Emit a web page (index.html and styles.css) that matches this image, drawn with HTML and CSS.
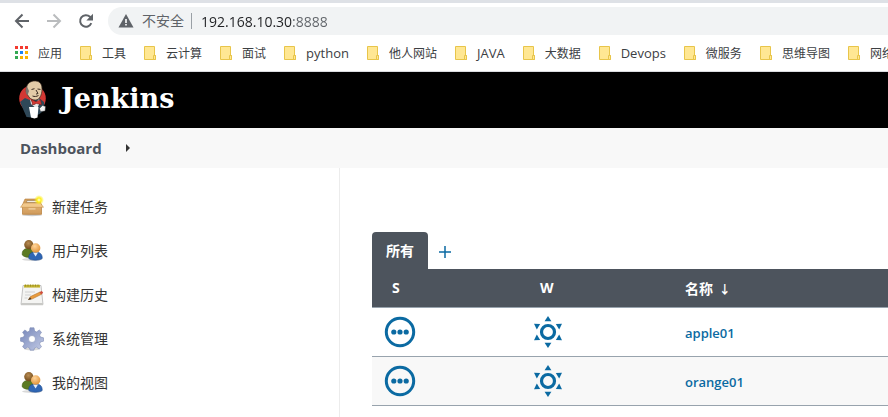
FILE: index.html
```html
<!DOCTYPE html>
<html lang="zh-CN">
<head>
  <meta charset="UTF-8" />
  <title>Dashboard [Jenkins]</title>
  <link rel="stylesheet" href="styles.css">
</head>
<body>
  <!-- shared icons -->
  <svg class="sprite" aria-hidden="true">
    <defs>
      <linearGradient id="box-front" x1="0" y1="0" x2="0" y2="1">
        <stop offset="0" stop-color="#e3b272" />
        <stop offset="1" stop-color="#cf9a5c" />
      </linearGradient>
      <linearGradient id="gear-fill" x1="0" y1="0" x2="1" y2="1">
        <stop offset="0" stop-color="#7485b8" />
        <stop offset="1" stop-color="#c3cbe6" />
      </linearGradient>
      <radialGradient id="head-dark" cx=".45" cy=".35" r=".7">
        <stop offset="0" stop-color="#b98d55" />
        <stop offset="1" stop-color="#6b4413" />
      </radialGradient>
      <radialGradient id="head-light" cx=".4" cy=".3" r=".8">
        <stop offset="0" stop-color="#ffd59a" />
        <stop offset="1" stop-color="#dd8a2c" />
      </radialGradient>
      <radialGradient id="glow">
        <stop offset="0" stop-color="#ffffe8" />
        <stop offset=".4" stop-color="#fff01e" />
        <stop offset="1" stop-color="#fff01e" stop-opacity="0" />
      </radialGradient>
    </defs>
    <symbol id="folder" viewBox="0 0 12 14">
      <path d="M.5.5h10v9h1v4H.5z" fill="#ffe793" stroke="#e8c54a" />
      <path d="M9.5 9.5h2v4h-2z" fill="#ffe793" stroke="#e8c54a" />
    </symbol>
    <symbol id="users" viewBox="0 0 24 24">
      <ellipse cx="12" cy="20.500" rx="10" ry="1.500" fill="#000" opacity=".15" />
      <path d="M2.300 16c-.5-4 1.500-6.500 5.700-6.500s6 2 6 7c-3 2.500-9 2.500-11.700-.5z" fill="#5b7a22" stroke="#405a12" stroke-width=".6" />
      <circle cx="8.800" cy="5.700" r="4.600" fill="url(#head-dark)" />
      <path d="M8.800 19.500c-.3-4.500 2-6.500 6.600-6.500s7 2 6.800 6.500c-3 2.300-10.500 2.300-13.400 0z" fill="#2f66b4" stroke="#1f4a8c" stroke-width=".6" />
      <path d="M13 13.500l2.600 4 2.400-4z" fill="#e6edf7" />
      <circle cx="15.700" cy="9" r="4.700" fill="url(#head-light)" />
    </symbol>
    <symbol id="pending" viewBox="0 0 32 32">
      <circle cx="16" cy="16" r="13.700" fill="none" stroke="#0b6aa2" stroke-width="3" />
      <circle cx="9.800" cy="16" r="2.600" fill="#0b6aa2" />
      <circle cx="16" cy="16" r="2.600" fill="#0b6aa2" />
      <circle cx="22.200" cy="16" r="2.600" fill="#0b6aa2" />
    </symbol>
    <symbol id="sunny" viewBox="0 0 32 32">
      <circle cx="16" cy="16" r="6.500" fill="none" stroke="#0b6aa2" stroke-width="3.200" />
      <g fill="#0b6aa2">
        <path d="M16 0l3.400 5.200h-6.800z" />
        <path d="M16 32l3.400-5.200h-6.800z" />
        <path d="M2 7.700l6.200.3-3.400 5.400z" />
        <path d="M30 7.700l-6.200.3 3.400 5.400z" />
        <path d="M2 24.300l6.200-.3-3.400-5.400z" />
        <path d="M30 24.300l-6.200-.3 3.400-5.400z" />
      </g>
    </symbol>
  </svg>

  <div class="browser">
    <div class="toolbar">
      <button class="nav-btn" type="button" aria-label="后退">
        <svg width="16" height="16" viewBox="0 0 16 16"><path d="M15 8H2M8.500 1.500L2 8l6.500 6.500" fill="none" stroke="#5f6368" stroke-width="2" /></svg>
      </button>
      <button class="nav-btn" type="button" aria-label="前进">
        <svg width="16" height="16" viewBox="0 0 16 16"><path d="M1 8h13M7.500 1.500L14 8l-6.500 6.500" fill="none" stroke="#babcbe" stroke-width="2" /></svg>
      </button>
      <button class="nav-btn" type="button" aria-label="重新加载">
        <svg width="16" height="16" viewBox="0 0 16 16"><path d="M13.300 10.200A5.800 5.800 0 1 1 12 3.800l1.400 1.400" fill="none" stroke="#5f6368" stroke-width="2" /><path d="M15 .8v6.700H8.300z" fill="#5f6368" /></svg>
      </button>
      <div class="address">
        <svg width="16" height="14" viewBox="0 0 16 14"><path d="M8 0l7.500 13.500H.5z" fill="#5f6368" /><path d="M7.200 5h1.600v4H7.200zM7.200 10h1.600v1.600H7.200z" fill="#fff" /></svg>
        <label class="security" for="url">不安全</label>
        <input class="url" id="url" type="text" value="192.168.10.30:8888" />
      </div>
    </div>
    <nav class="bookmarks">
      <a href="#">
        <svg width="13" height="14" viewBox="0 0 13 14">
          <path d="M0 0h3v3H0zM5 0h3v3H5zM10 0h3v3h-3z" fill="#f33a2f" />
          <path d="M0 5h3v3H0zM0 10h3v3H0z" fill="#34a853" />
          <path d="M5 5h3v3H5z" fill="#1a82f7" />
          <path d="M10 5h3v3h-3zM5 10h3v3H5zM10 10h3v3h-3z" fill="#fbb300" />
        </svg>
        应用
      </a>
      <a href="#"><svg width="12" height="14"><use href="#folder" /></svg>工具</a>
      <a href="#"><svg width="12" height="14"><use href="#folder" /></svg>云计算</a>
      <a href="#"><svg width="12" height="14"><use href="#folder" /></svg>面试</a>
      <a class="latin" href="#"><svg width="12" height="14"><use href="#folder" /></svg>python</a>
      <a href="#"><svg width="12" height="14"><use href="#folder" /></svg>他人网站</a>
      <a class="latin" href="#"><svg width="12" height="14"><use href="#folder" /></svg>JAVA</a>
      <a href="#"><svg width="12" height="14"><use href="#folder" /></svg>大数据</a>
      <a class="latin" href="#"><svg width="12" height="14"><use href="#folder" /></svg>Devops</a>
      <a href="#"><svg width="12" height="14"><use href="#folder" /></svg>微服务</a>
      <a href="#"><svg width="12" height="14"><use href="#folder" /></svg>思维导图</a>
      <a href="#"><svg width="12" height="14"><use href="#folder" /></svg>网络</a>
    </nav>
  </div>

  <header class="header">
    <a class="logo" href="#">
      <svg width="28" height="40" viewBox="0 0 28 40">
        <circle cx="13.500" cy="18.500" r="13.300" fill="#d33833" />
        <path d="M1 22l5-4 7 3 7-3 5 4 .5 8-5 4-8 3.500-5-.5z" fill="#2f4858" />
        <path d="M11 19l4 6 5-6 1 3-3 7-6-5z" fill="#e9e9e9" />
        <path d="M7.500 8c.5-5 4.500-7.200 9-7 5 .3 6.800 4 6.500 9-.2 5-2.500 9.800-6.300 10-4 .3-6.500-2-8-5-1.500-2-2-4.500-1.200-7z" fill="#e3cba8" stroke="#3a2c22" stroke-width=".7" />
        <path d="M8 6.500c-2 3-1.800 6.500.5 9l1.500-4.500z" fill="#77736c" />
        <path d="M12.500 9.500l3-.8M18.500 9l3 .4M17 10l2 3.500-2 .6M13.500 16c2 .8 4 .6 6-.5" fill="none" stroke="#3a2c22" stroke-width="1" />
        <path d="M12.500 19.500l4.500 2.200 4.500-2 1 5-5-1.200-4 1.500z" fill="#d33833" stroke="#6f1815" stroke-width=".5" />
        <path d="M10 27h9.500l-1 10.500-3 1-3.500-1z" fill="#fff" />
        <path d="M20.500 28.500l3-3 3 1-.5 4.500-4.500.5z" fill="#f2f2f2" stroke="#333" stroke-width=".4" />
      </svg>
      <span>Jenkins</span>
    </a>
  </header>

  <nav class="breadcrumb">
    <a href="#">Dashboard</a>
    <svg width="4" height="8" viewBox="0 0 4 8"><path d="M0 0l4 4-4 4z" fill="#333" /></svg>
  </nav>

  <div class="page">
    <aside class="side-panel">
      <ul class="tasks">
        <li><a href="#">
          <svg width="24" height="24" viewBox="0 0 24 24">
            <ellipse cx="12" cy="20" rx="10" ry="1.200" fill="#000" opacity=".2" />
            <path d="M5 4h14l2 4.500H3z" fill="#d3a15f" stroke="#b67b35" stroke-width=".6" />
            <path d="M7 5.500h10l.6 2H6.400z" fill="#f0ece4" stroke="#8d6a3c" stroke-width=".5" />
            <path d="M2.500 9.500h19v9.800h-19z" fill="url(#box-front)" stroke="#b67b35" stroke-width=".7" />
            <path d="M3.500 8h17l3 4.300H.5z" fill="#f1c88c" stroke="#c08a45" stroke-width=".5" />
            <path d="M8.500 13.300h7v1.200h-7z" fill="#f3d7ac" />
            <circle cx="19" cy="5" r="5" fill="url(#glow)" />
          </svg>
          新建任务
        </a></li>
        <li><a href="#"><svg width="24" height="24"><use href="#users" /></svg>用户列表</a></li>
        <li><a href="#">
          <svg width="24" height="24" viewBox="0 0 24 24">
            <path d="M3 2.500h18l2 19H1z" fill="#f4f4f2" stroke="#b5b5b5" stroke-width=".8" />
            <path d="M1.200 20h21.600l.2 2.200H1z" fill="#c9c9c6" />
            <path d="M4 1.800h16v2.800H4z" fill="#c4b432" />
            <path d="M5.500 1.500v2M8 1.500v2M10.500 1.500v2M13 1.500v2M15.500 1.500v2M18 1.500v2" stroke="#8f8420" stroke-width=".8" />
            <path d="M5 9h10M5 12h6M4.500 15h3" stroke="#d0d0d0" />
            <path d="M8.500 16.500l2-3L20 9l1.500 2.300-9 4.500z" fill="#e99b3e" stroke="#a8691f" stroke-width=".5" />
            <path d="M8 17l2-2.800 1.500 2z" fill="#493722" />
            <path d="M19.500 9l2.300-1 1.400 1.800-1.900 1.700z" fill="#cf4d3d" />
          </svg>
          构建历史
        </a></li>
        <li><a href="#">
          <svg width="24" height="24" viewBox="0 0 24 24">
            <ellipse cx="12" cy="22" rx="8" ry="1.500" fill="#000" opacity=".15" />
            <path fill-rule="evenodd" d="M10 .8h4l.6 3.300 2 .8 2.700-1.900 2.200 2.200-1.900 2.900.9 2 3 .7v3.400l-3 .7-.9 2 1.900 2.900-2.400 2.200-2.600-1.800-2 .8-.6 2.200h-3.800l-.6-2.200-2-.8L5 21.900l-2.400-2.100 1.800-2.900-.9-2-3-.7v-3.400l3-.7.9-2-1.800-2.900L4.900 3l2.600 1.900 2-.8zM12 8.500a3.500 3.500 0 1 0 0 7 3.500 3.500 0 0 0 0-7z" fill="url(#gear-fill)" stroke="#7e8bb3" stroke-width=".6" />
          </svg>
          系统管理
        </a></li>
        <li><a href="#"><svg width="24" height="24"><use href="#users" /></svg>我的视图</a></li>
      </ul>
    </aside>

    <main class="main-panel">
      <div class="tabs">
        <a class="tab active" href="#">所有</a>
        <a class="tab-add" href="#" aria-label="新建视图">
          <svg width="12" height="12" viewBox="0 0 12 12"><path d="M6 0v12M0 6h12" stroke="#0b6aa2" stroke-width="1.500" /></svg>
        </a>
      </div>
      <table class="jobs">
        <thead>
          <tr>
            <th class="col-status">S</th>
            <th class="col-weather">W</th>
            <th>名称 <span class="sort">↓</span></th>
          </tr>
        </thead>
        <tbody>
          <tr>
            <td class="icon"><svg width="32" height="32"><use href="#pending" /></svg></td>
            <td class="icon"><svg width="32" height="32"><use href="#sunny" /></svg></td>
            <td><a href="#">apple01</a></td>
          </tr>
          <tr>
            <td class="icon"><svg width="32" height="32"><use href="#pending" /></svg></td>
            <td class="icon"><svg width="32" height="32"><use href="#sunny" /></svg></td>
            <td><a href="#">orange01</a></td>
          </tr>
        </tbody>
      </table>
    </main>
  </div>
</body>
</html>
```
FILE: styles.css
```css
* {
  box-sizing: border-box;
}
body {
  margin: 0;
  font-family: "Open Sans", "Noto Sans CJK SC", sans-serif;
  font-size: 14px;
  color: #333;
  background: #fff;
  overflow-x: hidden;
}
a {
  color: inherit;
  text-decoration: none;
}
svg {
  display: block;
  flex-shrink: 0;
}
.sprite {
  position: absolute;
  width: 0;
  height: 0;
}

/* browser bar */
.browser {
  border-top: 3px solid #dee1e6;
  border-bottom: 1px solid #dadce0;
}
.toolbar {
  display: flex;
  align-items: center;
  gap: 16px;
  padding: 4px 0 0 14px;
}
.nav-btn {
  padding: 0;
  border: 0;
  background: none;
}
.address {
  flex: 1;
  display: flex;
  align-items: center;
  height: 28px;
  margin-left: -2px;
  padding-left: 10px;
  border-radius: 14px 0 0 14px;
  background: #f1f3f4;
}
.security {
  margin-left: 8px;
  padding-right: 7px;
  border-right: 1px solid #9aa0a6;
  line-height: 16px;
  color: #5f6368;
}
/* host is dark, port is grey */
.url {
  flex: 1;
  min-width: 0;
  margin-left: 9px;
  padding: 0;
  border: 0;
  outline: 0;
  font: inherit;
  color: transparent;
  background: linear-gradient(to right, #202124 91px, #5f6368 91px);
  -webkit-background-clip: text;
  background-clip: text;
}
.bookmarks {
  display: flex;
  gap: 18px;
  height: 36px;
  padding-left: 15px;
  overflow: hidden;
  font-size: 12px;
  color: #3c4043;
  white-space: nowrap;
}
.bookmarks a {
  display: flex;
  align-items: center;
  gap: 10px;
}
.bookmarks .latin {
  font-size: 13px;
}

/* jenkins header */
.header {
  display: flex;
  align-items: center;
  height: 56px;
  padding: 0 19px;
  background: #000;
}
.logo {
  display: flex;
  align-items: center;
  gap: 14px;
  font-family: "DejaVu Serif", serif;
  font-size: 27px;
  font-weight: bold;
  line-height: 32px;
  color: #fff;
}
.logo span {
  padding-bottom: 2px;
}
.breadcrumb {
  display: flex;
  align-items: center;
  gap: 24px;
  height: 40px;
  padding: 0 20px;
  font-size: 15px;
  font-weight: bold;
  color: #4d545d;
  background: #f8f8f8;
}

.page {
  display: flex;
  min-height: 249px;
}
.side-panel {
  width: 340px;
  flex-shrink: 0;
  padding: 27px 20px 0;
  border-right: 1px solid #ececec;
}
.tasks {
  display: flex;
  flex-direction: column;
  gap: 20px;
  margin: 0;
  padding: 0;
  list-style: none;
}
.tasks a {
  display: flex;
  align-items: center;
  gap: 8px;
  line-height: 24px;
}
.main-panel {
  flex: 1;
  padding: 64px 0 0 32px;
}
.tabs {
  display: flex;
  align-items: center;
}
.tab {
  padding: 0 14px;
  border-radius: 4px 4px 0 0;
  line-height: 37px;
  font-weight: bold;
  color: #fff;
  background: #4d545d;
}
.tab-add {
  padding: 2px 11px 0;
}

.jobs {
  width: 100%;
  border-collapse: collapse;
  table-layout: fixed;
  font-size: 13px;
}
.jobs th {
  height: 38px;
  padding: 0 0 0 20px;
  font-size: 14px;
  text-align: left;
  color: #fff;
  background: #4d545d;
}
.jobs .col-status {
  width: 148px;
}
.jobs .col-weather {
  width: 145px;
}
.jobs td {
  height: 49px;
  padding: 2px 0 0 20px;
  font-weight: 600;
  color: #0b6aa2;
}
.jobs tr {
  border-bottom: 1px solid #98a3ad;
}
.jobs td.icon {
  padding: 0 0 0 12px;
}
.jobs tbody tr:nth-child(even) {
  background: #f8f8f8;
}
.sort {
  font-size: 12px;
  margin-left: 2px;
}
```
